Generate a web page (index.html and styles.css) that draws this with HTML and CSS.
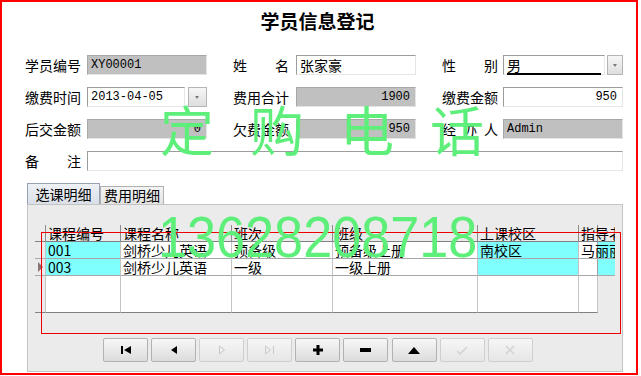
FILE: index.html
```html
<!DOCTYPE html>
<html lang="zh-CN">
<head>
  <meta charset="UTF-8" />
  <title>学员信息登记</title>
  <link rel="stylesheet" href="styles.css">
</head>
<body>
  <div class="frame">
    <h1 class="title">学员信息登记</h1>

    <!-- Student form -->
    <div class="form">
      <span class="lbl">学员编号</span>
      <div class="field ro mono">XY00001</div>
      <span class="lbl gap">姓名</span>
      <div class="field">张家豪</div>
      <span class="lbl gap">性别</span>
      <div class="combo">
        <div class="field"><span class="sel">男</span></div>
        <span class="drop"></span>
      </div>

      <span class="lbl">缴费时间</span>
      <div class="combo date">
        <div class="field mono">2013-04-05</div>
        <span class="drop"></span>
      </div>
      <span class="lbl gap">费用合计</span>
      <div class="field ro mono num">1900</div>
      <span class="lbl gap">缴费金额</span>
      <div class="field mono num">950</div>

      <span class="lbl">后交金额</span>
      <div class="field ro mono num">0</div>
      <span class="lbl gap">欠费金额</span>
      <div class="field ro mono num">950</div>
      <span class="lbl gap">经办人</span>
      <div class="field ro mono">Admin</div>

      <span class="lbl">备注</span>
      <div class="field wide"></div>
    </div>

    <!-- Tabs -->
    <div class="tabs">
      <span class="tab active">选课明细</span>
      <span class="tab">费用明细</span>
    </div>

    <div class="panel">
      <div class="grid">
        <div class="row head">
          <span class="ind"></span>
          <span>课程编号</span>
          <span>课程名称</span>
          <span>班次</span>
          <span>班级</span>
          <span>上课校区</span>
          <span class="last">指导老师</span>
        </div>
        <div class="row">
          <span class="ind"></span>
          <span class="hl">001</span>
          <span>剑桥少儿英语</span>
          <span>预备级</span>
          <span>预备级上册</span>
          <span class="hl">南校区</span>
          <span class="last">马丽丽</span>
        </div>
        <div class="row">
          <span class="ind cur"></span>
          <span class="hl">003</span>
          <span>剑桥少儿英语</span>
          <span>一级</span>
          <span>一级上册</span>
          <span class="hl"></span>
          <span class="last"></span>
        </div>
        <div class="row empty">
          <span class="ind"></span>
          <span></span><span></span><span></span><span></span><span></span><span></span>
        </div>
      </div>

      <div class="nav">
        <button class="btn"><svg width="12" height="8" viewBox="0 0 12 8"><rect x="1" y="0" width="2" height="8"/><path d="M11 0 L4 4 L11 8 Z"/></svg></button>
        <button class="btn"><svg width="8" height="8" viewBox="0 0 8 8"><path d="M7 0 L1 4 L7 8 Z"/></svg></button>
        <button class="btn off"><svg width="8" height="10" viewBox="0 0 8 10"><path d="M1.5 1 L6.5 5 L1.5 9 Z" fill="none" stroke="#c9c9c9"/></svg></button>
        <button class="btn off"><svg width="12" height="10" viewBox="0 0 12 10"><path d="M1.5 1 L6.5 5 L1.5 9 Z M9.5 1 V9" fill="none" stroke="#c9c9c9"/></svg></button>
        <button class="btn"><svg width="10" height="10" viewBox="0 0 10 10"><path d="M3.5 0 H6.5 V3.5 H10 V6.5 H6.5 V10 H3.5 V6.5 H0 V3.5 H3.5 Z"/></svg></button>
        <button class="btn"><svg width="11" height="4" viewBox="0 0 11 4"><rect x="0" y="0" width="11" height="4"/></svg></button>
        <button class="btn"><svg width="12" height="7" viewBox="0 0 12 7"><path d="M0 7 L6 0 L12 7 Z"/></svg></button>
        <button class="btn off"><svg width="12" height="9" viewBox="0 0 12 9"><path d="M1 5 L4 8 L11 1" fill="none" stroke="#d2d2d2" stroke-width="1.5"/></svg></button>
        <button class="btn off"><svg width="10" height="10" viewBox="0 0 10 10"><path d="M1 1 L9 9 M9 1 L1 9" fill="none" stroke="#d2d2d2" stroke-width="1.5"/></svg></button>
      </div>

      <div class="mark"></div>
    </div>

    <div class="watermark words">定购电话</div>
    <div class="watermark phone">13628208718</div>
  </div>
</body>
</html>
```

FILE: styles.css
```css
* { box-sizing: border-box; }

body {
  margin: 0;
  background: #fff;
  font-family: "Noto Sans CJK SC", sans-serif;
  font-size: 14px;
  color: #000;
}

.frame {
  position: relative;
  width: 638px;
  height: 375px;
  border: 2px solid #f00;
  overflow: hidden;
}

.title {
  margin: 8px 3px 0 0;
  text-align: center;
  font-size: 19px;
  font-weight: bold;
  line-height: 22px;
}

/* form rows */
.form {
  display: grid;
  grid-template-columns: 62px 120px 89px 120px 87px 120px;
  grid-auto-rows: 20px;
  row-gap: 12px;
  margin: 23px 0 0 23px;
}

.lbl {
  width: 56px;
  line-height: 20px;
  text-align: justify;
  text-align-last: justify;
}

.lbl.gap {
  margin-left: 26px;
}

.field {
  height: 20px;
  padding: 0 3px;
  background: #fff;
  border: 1px solid;
  border-color: #9c9c9c #e6e6e6 #e6e6e6 #9c9c9c;
  line-height: 18px;
  white-space: nowrap;
  overflow-x: clip;
}

.field.ro {
  background: #c0c0c0;
  border-color: #a8a8a8 #e4e4e4 #e4e4e4 #a8a8a8;
}

.field.mono {
  font-family: "Liberation Mono", monospace;
  font-size: 12px;
}

.field.num {
  text-align: right;
  padding-right: 5px;
}

.field.wide {
  grid-column: 2 / 7;
}

.combo {
  display: flex;
  gap: 2px;
}

.combo .field {
  flex: 1;
}

.combo.date {
  width: 120px;
  gap: 3px;
}

.combo.date .drop {
  width: 19px;
}

.sel {
  display: inline-block;
  width: 100%;
  line-height: 16px;
  border-bottom: 2px solid #000;
}

.drop {
  position: relative;
  width: 16px;
  height: 20px;
  background: linear-gradient(#f6f6f6, #dedede);
  border: 1px solid #b4b4b4;
}

.drop::after {
  content: "";
  position: absolute;
  left: 50%;
  top: 8px;
  margin-left: -2.5px;
  border-top: 3px solid #7a7a7a;
  border-left: 2.5px solid transparent;
  border-right: 2.5px solid transparent;
}

/* tabs */
.tabs {
  display: flex;
  align-items: flex-end;
  height: 22px;
  margin: 12px 0 -1px 25px;
  position: relative;
}

.tab {
  height: 19px;
  padding: 0 3px;
  line-height: 17px;
  background: linear-gradient(#f4f4f4, #e2e2e2);
  border: 1px solid #b0b0b0;
  border-bottom: none;
}

.tab.active {
  width: 73px;
  height: 22px;
  line-height: 20px;
  text-align: center;
  background: linear-gradient(#eef1f6, #d9dee7);
  border-color: #98a2b3;
}

.panel {
  position: relative;
  width: 596px;
  height: 168px;
  margin-left: 25px;
  padding: 20px 0 0 7px;
  background: #ebebeb;
  border: 1px solid #c4c4c4;
}

/* course grid */
.row {
  display: grid;
  grid-template-columns: 11px 75px 111px 101px 145px 101px 36px;
  height: 17px;
  line-height: 16px;
}

.row span {
  padding-left: 2px;
  background: #fff;
  border-right: 1px solid #c4c4c4;
  border-bottom: 1px solid #a8a8a8;
  white-space: nowrap;
  overflow-x: clip;
}

.row .ind {
  padding: 0;
  position: relative;
  background: #ebebeb;
}

.row .hl {
  background: #80ffff;
}

.row .last {
  border-right: none;
  background: linear-gradient(90deg, #fff 0 18px, #a0a0a0 18px 19px, #80ffff 19px);
}

.row.head span {
  background: transparent;
  border-right-color: #8c8c8c;
  border-bottom-color: #808080;
}

.row.head .last {
  background: linear-gradient(90deg, transparent 0 18px, #8c8c8c 18px 19px, transparent 19px);
}

.ind.cur::after {
  content: "";
  position: absolute;
  left: 3px;
  top: 3px;
  border-left: 5px solid #8d7474;
  border-top: 5px solid transparent;
  border-bottom: 5px solid transparent;
}

.row.empty {
  grid-template-columns: 11px 75px 111px 101px 145px 101px 19px;
  height: 37px;
}

.row.empty span {
  border-bottom: 1px solid #808080;
}

/* navigator */
.nav {
  display: flex;
  gap: 3.1px;
  margin: 25px 0 0 68px;
}

.btn {
  display: flex;
  align-items: center;
  justify-content: center;
  width: 45px;
  height: 24px;
  padding: 0;
  background: linear-gradient(#f7f7f7, #dcdcdc);
  border: 1px solid #b2b2b2;
  border-radius: 2px;
}

.btn svg {
  fill: #000;
}

.btn.off {
  background: linear-gradient(#f6f6f6, #e6e6e6);
  border-color: #cfcfcf;
}

.mark {
  position: absolute;
  left: 13px;
  top: 27px;
  width: 580px;
  height: 102px;
  border: 1px solid #e00;
  pointer-events: none;
}

/* watermark text */
.watermark {
  position: absolute;
  color: #5eef7b;
  line-height: 1;
  white-space: nowrap;
  pointer-events: none;
}

.watermark.words {
  left: 158px;
  top: 100px;
  font-size: 54px;
  letter-spacing: 36px;
}

.watermark.phone {
  left: 156px;
  top: 206px;
  font-family: "Liberation Sans", sans-serif;
  font-size: 58px;
  transform: scaleX(0.9);
  transform-origin: left top;
}
```
